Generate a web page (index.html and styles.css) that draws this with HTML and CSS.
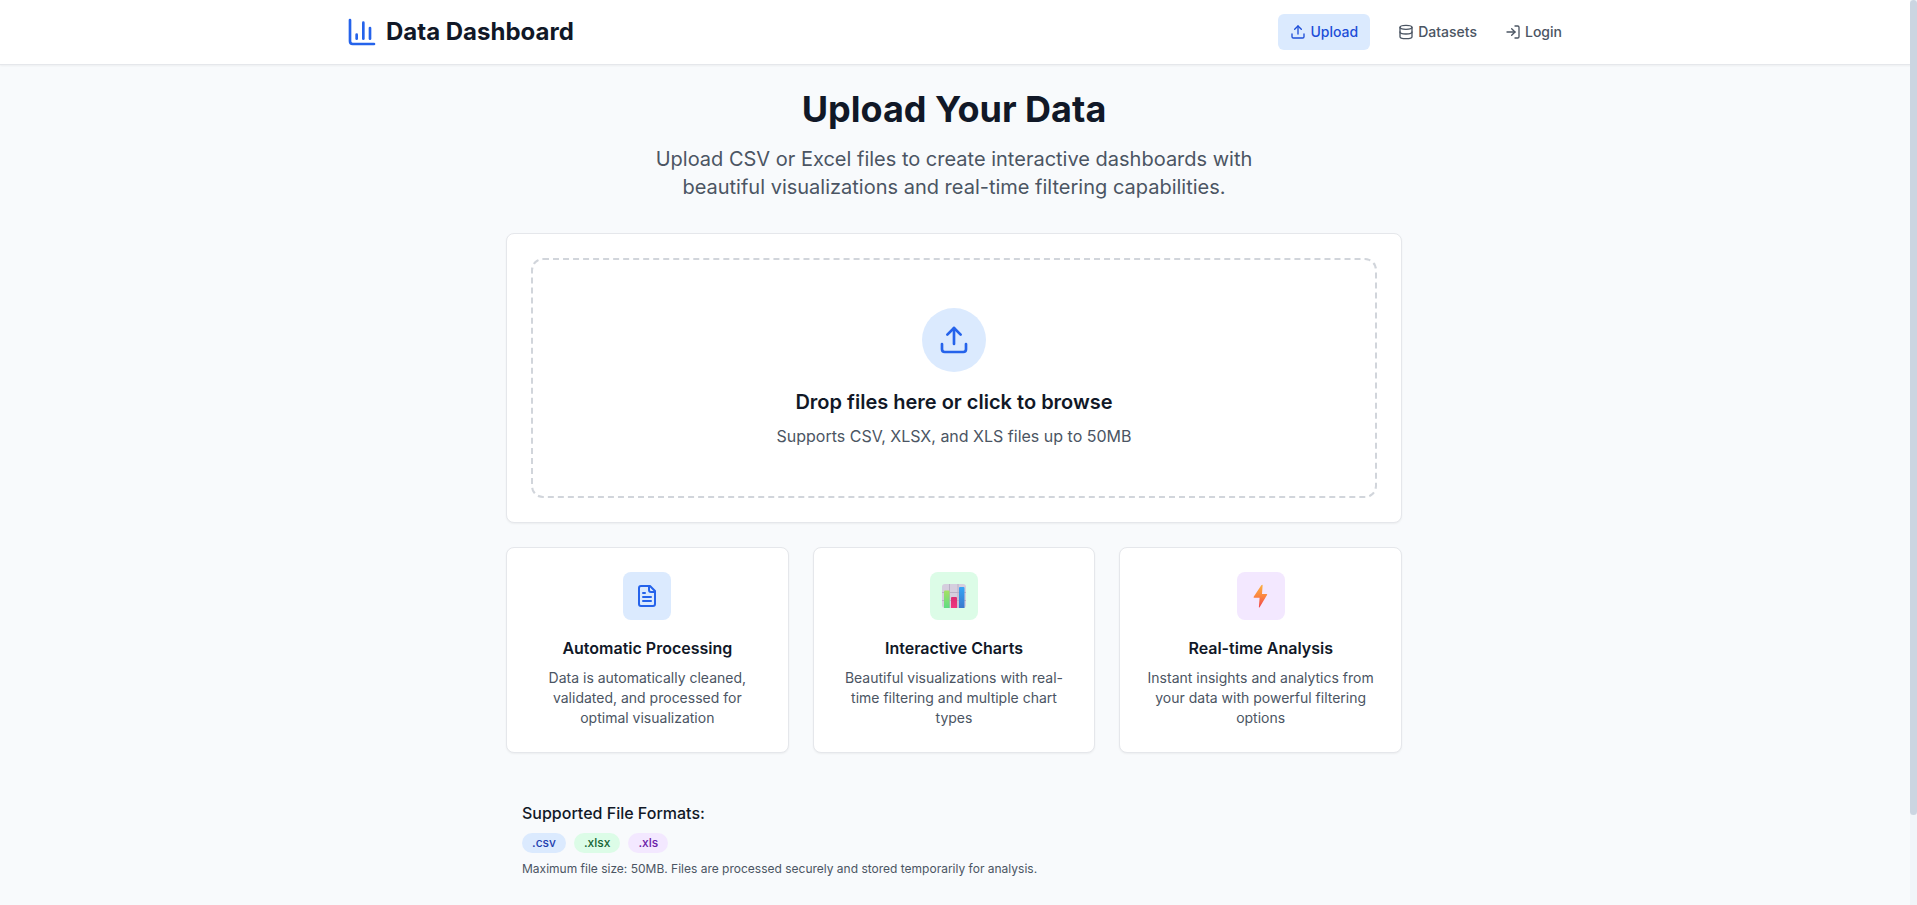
FILE: index.html
```html
<!DOCTYPE html>
<html lang="en">
<head>
  <meta charset="utf-8">
  <meta name="viewport" content="width=device-width, initial-scale=1">
  <title>Data Dashboard</title>
  <link rel="stylesheet" href="styles.css">
</head>
<body>
  <header class="topbar">
    <div class="topbar-inner">
      <a class="brand" href="#">
        <svg class="icon icon-xl" viewBox="0 0 24 24" aria-hidden="true"><path d="M3 3v16a2 2 0 0 0 2 2h16"/><path d="M18 17V9"/><path d="M13 17V5"/><path d="M8 17v-3"/></svg>
        <span>Data Dashboard</span>
      </a>
      <nav class="nav">
        <a class="nav-link active" href="#upload">
          <svg class="icon icon-sm" viewBox="0 0 24 24" aria-hidden="true"><path d="M12 3v12"/><path d="m17 8-5-5-5 5"/><path d="M21 15v4a2 2 0 0 1-2 2H5a2 2 0 0 1-2-2v-4"/></svg>
          <span>Upload</span>
        </a>
        <a class="nav-link" href="#datasets">
          <svg class="icon icon-sm" viewBox="0 0 24 24" aria-hidden="true"><ellipse cx="12" cy="5" rx="9" ry="3"/><path d="M3 5v14a9 3 0 0 0 18 0V5"/><path d="M3 12a9 3 0 0 0 18 0"/></svg>
          <span>Datasets</span>
        </a>
        <a class="nav-link" href="#login">
          <svg class="icon icon-sm" viewBox="0 0 24 24" aria-hidden="true"><path d="m10 17 5-5-5-5"/><path d="M15 12H3"/><path d="M15 3h4a2 2 0 0 1 2 2v14a2 2 0 0 1-2 2h-4"/></svg>
          <span>Login</span>
        </a>
      </nav>
    </div>
  </header>

  <main class="main">
    <div class="content">
      <section class="intro">
        <h1>Upload Your Data</h1>
        <p>Upload CSV or Excel files to create interactive dashboards with beautiful visualizations and real-time filtering capabilities.</p>
      </section>

      <section class="card">
        <label class="dropzone" for="file">
          <input class="visually-hidden" id="file" type="file" accept=".csv,.xlsx,.xls">
          <span class="drop-icon">
            <svg class="icon icon-xl" viewBox="0 0 24 24" aria-hidden="true"><path d="M12 3v12"/><path d="m17 8-5-5-5 5"/><path d="M21 15v4a2 2 0 0 1-2 2H5a2 2 0 0 1-2-2v-4"/></svg>
          </span>
          <span class="drop-title">Drop files here or click to browse</span>
          <span class="drop-hint">Supports CSV, XLSX, and XLS files up to 50MB</span>
        </label>
      </section>

      <section class="features">
        <article class="card feature">
          <div class="tile blue">
            <svg class="icon icon-md" viewBox="0 0 24 24" aria-hidden="true"><path d="M15 2H6a2 2 0 0 0-2 2v16a2 2 0 0 0 2 2h12a2 2 0 0 0 2-2V7Z"/><path d="M14 2v4a2 2 0 0 0 2 2h4"/><path d="M10 9H8"/><path d="M16 13H8"/><path d="M16 17H8"/></svg>
          </div>
          <h2>Automatic Processing</h2>
          <p>Data is automatically cleaned, validated, and processed for optimal visualization</p>
        </article>
        <article class="card feature">
          <div class="tile green">
            <svg class="icon-md" viewBox="0 0 24 24" aria-hidden="true">
              <defs>
                <linearGradient id="bar-green" x1="0" y1="0" x2="0" y2="1"><stop offset="0" stop-color="#a5e063"/><stop offset="1" stop-color="#5fdc84"/></linearGradient>
                <linearGradient id="bar-pink" x1="0" y1="0" x2="0" y2="1"><stop offset="0" stop-color="#d92d72"/><stop offset="1" stop-color="#f0357f"/></linearGradient>
                <linearGradient id="bar-blue" x1="0" y1="0" x2="0" y2="1"><stop offset="0" stop-color="#35a5f5"/><stop offset="1" stop-color="#3b78cc"/></linearGradient>
              </defs>
              <rect width="24" height="24" rx="3" fill="#d5cede"/>
              <path d="M7.5 0v24M16 0v24M0 8.5h24M0 16.5h24" fill="none" stroke="#b9b0c6" stroke-width="1"/>
              <path d="M2 24V7.500q0-1 1-1h3.500q1 0 1 1V24Z" fill="url(#bar-green)"/>
              <path d="M9 24V14q0-1 1-1h4q1 0 1 1v10Z" fill="url(#bar-pink)"/>
              <path d="M17 24V4q0-1 1-1h3.500q1 0 1 1v20Z" fill="url(#bar-blue)"/>
            </svg>
          </div>
          <h2>Interactive Charts</h2>
          <p>Beautiful visualizations with real-time filtering and multiple chart types</p>
        </article>
        <article class="card feature">
          <div class="tile purple">
            <svg class="icon-md" viewBox="0 0 24 24" aria-hidden="true">
              <defs>
                <linearGradient id="bolt" x1="0" y1="0" x2="0" y2="1"><stop offset="0" stop-color="#fbb03f"/><stop offset=".5" stop-color="#fb8640"/><stop offset="1" stop-color="#f0444f"/></linearGradient>
              </defs>
              <path d="M12.300 1.200Q13.800 0 13.600 1.600L13 10h4.600q1 0 .4 1l-7.200 12q-1 1.200-.9-.2l.7-9H5.200q-1 0-.5-1Z" fill="url(#bolt)"/>
            </svg>
          </div>
          <h2>Real-time Analysis</h2>
          <p>Instant insights and analytics from your data with powerful filtering options</p>
        </article>
      </section>

      <section class="formats">
        <h2>Supported File Formats:</h2>
        <ul class="pills">
          <li class="pill blue">.csv</li>
          <li class="pill green">.xlsx</li>
          <li class="pill purple">.xls</li>
        </ul>
        <p>Maximum file size: 50MB. Files are processed securely and stored temporarily for analysis.</p>
      </section>
    </div>
  </main>
  <div class="scrollbar" aria-hidden="true"><div class="thumb"></div></div>
</body>
</html>
```
FILE: styles.css
```css
* {
  box-sizing: border-box;
}

body {
  --rail: 9px;
  min-height: 100vh;
  margin: 0;
  background: #f8fafc;
  color: #111827;
  font-family: Inter, "Liberation Sans", sans-serif;
  font-size: 16px;
  line-height: 24px;
}

h1,
h2,
p,
ul {
  margin: 0;
  padding: 0;
}

a {
  color: inherit;
  text-decoration: none;
}

.icon {
  flex: none;
  fill: none;
  stroke: currentColor;
  stroke-width: 2;
  stroke-linecap: round;
  stroke-linejoin: round;
}

.icon-sm {
  width: 16px;
  height: 16px;
}

.icon-md {
  width: 24px;
  height: 24px;
}

.icon-xl {
  width: 32px;
  height: 32px;
}

/* Header */
.topbar {
  padding-right: var(--rail);
  background: #fff;
  border-bottom: 1px solid #e5e7eb;
  box-shadow: 0 1px 2px rgba(0, 0, 0, 0.05);
}

.topbar-inner {
  display: flex;
  align-items: center;
  justify-content: space-between;
  max-width: 1280px;
  min-height: 64px;
  margin: 0 auto;
  padding: 0 32px;
}

.brand {
  display: flex;
  align-items: center;
  gap: 8px;
  font-size: 24px;
  font-weight: 700;
  line-height: 32px;
}

.brand .icon {
  color: #2563eb;
}

.nav {
  display: flex;
  align-items: center;
  gap: 28px;
}

.nav-link {
  display: flex;
  align-items: center;
  gap: 4px;
  color: #4b5563;
  font-size: 14px;
  font-weight: 500;
  line-height: 20px;
}

.nav-link.active {
  padding: 8px 12px;
  border-radius: 6px;
  background: #dbeafe;
  color: #1d4ed8;
}

/* Main column */
.main {
  padding-right: var(--rail);
}

.content {
  max-width: 944px;
  margin: 0 auto;
  padding: 24px;
}

.intro {
  margin-bottom: 32px;
  text-align: center;
}

.intro h1 {
  margin-bottom: 16px;
  font-size: 36px;
  font-weight: 700;
  line-height: 40px;
}

.intro p {
  max-width: 672px;
  margin: 0 auto;
  color: #4b5563;
  font-size: 20px;
  line-height: 28px;
}

.card {
  padding: 24px;
  border: 1px solid #e5e7eb;
  border-radius: 8px;
  background: #fff;
  box-shadow: 0 1px 2px rgba(0, 0, 0, 0.05);
}

.dropzone {
  display: flex;
  flex-direction: column;
  align-items: center;
  padding: 48px;
  border: 2px dashed #d1d5db;
  border-radius: 12px;
  text-align: center;
  cursor: pointer;
}

.visually-hidden {
  position: absolute;
  width: 1px;
  height: 1px;
  overflow: hidden;
  opacity: 0;
}

.drop-icon {
  display: grid;
  place-items: center;
  width: 64px;
  height: 64px;
  margin-bottom: 16px;
  border-radius: 50%;
  background: #dbeafe;
  color: #2563eb;
}

.drop-title {
  margin-bottom: 8px;
  font-size: 20px;
  font-weight: 600;
  line-height: 28px;
}

.drop-hint {
  color: #4b5563;
}

.features {
  display: grid;
  grid-template-columns: repeat(3, minmax(0, 1fr));
  gap: 24px;
  margin-top: 24px;
}

.feature {
  text-align: center;
}

.tile {
  display: grid;
  place-items: center;
  width: 48px;
  height: 48px;
  margin: 0 auto 16px;
  border-radius: 8px;
}

.tile .icon {
  color: #2563eb;
}

.feature h2 {
  margin-bottom: 8px;
  font-size: 16px;
  font-weight: 600;
}

.feature p {
  color: #4b5563;
  font-size: 14px;
  line-height: 20px;
}

.blue {
  background: #dbeafe;
  color: #1e40af;
}

.green {
  background: #dcfce7;
  color: #166534;
}

.purple {
  background: #f3e8ff;
  color: #6b21a8;
}

.formats {
  margin-top: 32px;
  padding: 16px;
}

.formats h2 {
  margin-bottom: 8px;
  font-size: 16px;
  font-weight: 500;
}

.formats p {
  color: #4b5563;
  font-size: 12px;
  line-height: 16px;
}

.pills {
  display: flex;
  gap: 8px;
  margin-bottom: 8px;
  list-style: none;
}

.pill {
  padding: 2px 10px;
  border-radius: 10px;
  font-size: 12px;
  font-weight: 500;
  line-height: 16px;
}

/* Scroll rail, drawn over the right edge of the window */
.scrollbar {
  position: fixed;
  top: 0;
  right: 0;
  width: 7px;
  height: 100vh;
  background: #f1f5f9;
}

.thumb {
  height: 90%;
  border-radius: 4px;
  background: #cbd5e1;
}
```
